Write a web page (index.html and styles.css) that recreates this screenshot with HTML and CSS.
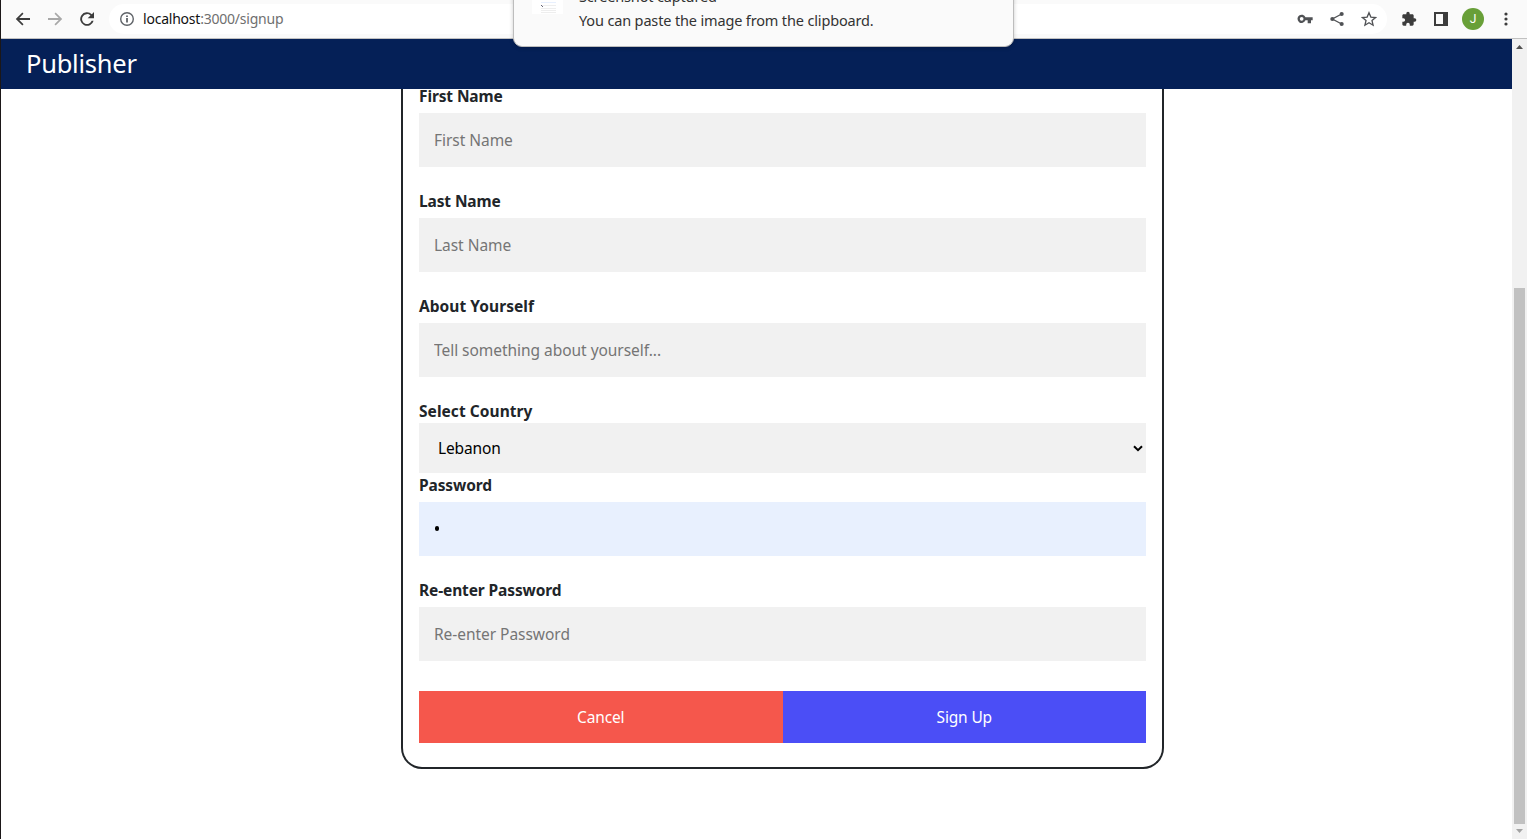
FILE: index.html
```html
<!DOCTYPE html>
<html lang="en">
<head>
<meta charset="utf-8">
<title>Publisher</title>
<link rel="stylesheet" href="styles.css">
</head>
<body>
<div class="window">
  <header class="toolbar">
    <svg class="icon" viewBox="0 0 24 24"><path fill="#3c3c3c" d="M22.500 10.600H6.400l6.300-6.300L11 2.400 1.200 12l9.800 9.700 1.800-1.900-6.400-6.400h16.100z"/></svg>
    <svg class="icon" viewBox="0 0 24 24"><path fill="#a8a8a8" d="M1.500 10.600h16.100l-6.300-6.300L13 2.400l9.800 9.600-9.800 9.700-1.800-1.900 6.400-6.400H1.500z"/></svg>
    <svg class="icon" viewBox="0 0 24 24"><path fill="#3c3c3c" d="M19.200 4.800A10.200 10.200 0 1 0 21.900 14.500h-2.900A7.400 7.400 0 1 1 17.200 6.800L13 11h9.500V1.500z"/></svg>
    <div class="omnibox">
      <svg class="info" viewBox="0 0 16 16"><circle cx="8" cy="8" r="6.300" fill="none" stroke="#5f6368" stroke-width="1.400"/><path fill="#5f6368" d="M7.100 7h1.800v4.500H7.100zM7.100 4.400h1.800v1.700H7.100z"/></svg>
      <span class="url"><span class="host">localhost</span>:3000/signup</span>
      <div class="actions">
        <svg viewBox="0 0 24 24"><path fill="#505255" d="M12.700 9.500A6.200 6.200 0 1 0 12.700 14H16v4.300h5V14h2.500V9.500zM7 14.500a2.800 2.800 0 1 1 0-5.600 2.800 2.800 0 0 1 0 5.600z"/></svg>
        <svg viewBox="0 0 24 24"><path d="M19 4.500 5 12l14 7.500" fill="none" stroke="#505255" stroke-width="2"/><g fill="#505255"><circle cx="19" cy="4.500" r="3.100"/><circle cx="5" cy="12" r="3.100"/><circle cx="19" cy="19.500" r="3.100"/></g></svg>
        <svg viewBox="0 0 24 24"><path d="m12 2.700 2.800 6.500 7 .6-5.300 4.600 1.600 6.900-6.100-3.700-6.100 3.700 1.600-6.900-5.300-4.600 7-.6z" fill="none" stroke="#505255" stroke-width="2"/></svg>
      </div>
    </div>
    <div class="extras">
      <svg class="icon" viewBox="0 0 24 24"><path fill="#3c3c3c" d="M20.500 11H19V7c0-1.100-.9-2-2-2h-4V3.500a2.500 2.500 0 0 0-5 0V5H4c-1.100 0-2 .9-2 2v3.800h1.500a2.700 2.700 0 0 1 0 5.400H2V20c0 1.100.9 2 2 2h3.800v-1.500a2.700 2.700 0 0 1 5.400 0V22H17c1.100 0 2-.9 2-2v-4h1.500a2.500 2.500 0 0 0 0-5z"/></svg>
      <svg class="panel" viewBox="0 0 14 14"><path fill="#3c3c3c" fill-rule="evenodd" d="M0 0h14v14H0zM2 2v10h7V2z"/></svg>
      <span class="avatar">J</span>
      <svg class="dots" viewBox="0 0 4 14"><g fill="#3c3c3c"><circle cx="2" cy="2" r="1.600"/><circle cx="2" cy="7" r="1.600"/><circle cx="2" cy="12" r="1.600"/></g></svg>
    </div>
  </header>

  <div class="viewport">
    <div class="page">
      <nav class="navbar"><span class="brand">Publisher</span></nav>
      <main class="content">
        <form class="card">
          <label class="label" for="first">First Name</label>
          <input class="field" id="first" type="text" placeholder="First Name">
          <label class="label" for="last">Last Name</label>
          <input class="field" id="last" type="text" placeholder="Last Name">
          <label class="label label-wide" for="about">About Yourself</label>
          <input class="field" id="about" type="text" placeholder="Tell something about yourself...">
          <span class="label label-tight label-wide">Select Country</span>
          <div class="select"><span>Lebanon</span>
            <svg class="chevron" viewBox="0 0 10 7"><path d="m1 1.200 4 4 4-4" fill="none" stroke="#000" stroke-width="2"/></svg>
          </div>
          <span class="label">Password</span>
          <div class="field filled"><span class="bullet"></span></div>
          <label class="label" for="again">Re-enter Password</label>
          <input class="field" id="again" type="text" placeholder="Re-enter Password">
          <div class="buttons">
            <button class="btn cancel" type="button">Cancel</button>
            <button class="btn signup" type="button">Sign Up</button>
          </div>
        </form>
      </main>
    </div>
    <aside class="scrollbar">
      <svg class="arrow" viewBox="0 0 7 4"><path fill="#505050" d="M0 4 3.500 0 7 4z"/></svg>
      <div class="thumb"></div>
      <svg class="arrow" viewBox="0 0 7 4"><path fill="#a3a3a3" d="M0 0h7L3.500 4z"/></svg>
    </aside>
  </div>

  <div class="notice">
    <svg class="thumbnail" viewBox="0 0 31 14"><path fill="#fff" d="M0 0h31v14H0z"/><path fill="#e8f0fe" d="M9 2h15v1H9z"/><path fill="#eee" d="M9 5h15v1H9zM9 8h15v1H9zM9 10h15v1H9zM9 12h15v1H9z"/><path fill="#667" d="M9 5h1v1H9zM10 6h1v1h-1z"/></svg>
    <div class="notice-text"><div class="notice-title">Screenshot captured</div><div class="notice-body">You can paste the image from the clipboard.</div></div>
  </div>
</div>
</body>
</html>
```

FILE: styles.css
```css
* { box-sizing: border-box; }
body { margin: 0; font-family: "Noto Sans", sans-serif; color: #212529; background: #fff; overflow: hidden; }
svg { display: block; flex: none; }
.window { position: relative; width: 1527px; height: 839px; display: flex; flex-direction: column; border-left: 1px solid #1b1718; overflow: hidden; }

.toolbar { height: 39px; flex: none; display: flex; align-items: center; padding-left: 14px; background: #fafafa; border-bottom: 1px solid #c1c1c1; }
.icon { width: 16px; height: 16px; margin-right: 16px; }
.omnibox { width: 1278px; height: 30px; margin-left: -2px; border-radius: 15px; background: #fff; display: flex; align-items: center; padding: 0 10px; }
.info { width: 16px; height: 16px; }
.url { margin: -1px 0 0 8px; font-size: 14px; letter-spacing: -.22px; color: #6f6f6f; }
.host { color: #111; }
.actions { margin-left: auto; display: flex; gap: 16px; }
.actions svg { width: 16px; height: 16px; }
.extras { display: flex; align-items: center; margin-left: 14px; }
.panel { width: 14px; height: 14px; margin-left: 1px; }
.avatar { width: 22px; height: 22px; margin-left: 14px; border-radius: 50%; background: #689f38; color: #fff; font: 12px/22px Roboto, sans-serif; text-align: center; }
.dots { width: 4px; height: 14px; margin-left: 19.500px; }

.viewport { flex: 1; min-height: 0; display: flex; }
.page { flex: 1; display: flex; flex-direction: column; }
.navbar { height: 50px; flex: none; background: #052057; padding-left: 25px; }
.brand { display: block; font-size: 25.500px; line-height: 49px; color: #fff; letter-spacing: -.25px; }
.content { flex: 1; min-height: 0; overflow: hidden; }
.card { width: 763px; margin: -5px 0 0 400px; padding: 0 16px 24px; border: solid #212529; border-width: 0 2px 2px; border-radius: 0 0 21px 21px; display: flex; flex-direction: column; }
.label { height: 24px; margin-bottom: 5px; font-size: 15.500px; line-height: 24px; font-weight: 700; letter-spacing: -.12px; }
.label-wide { letter-spacing: .05px; }
.label-tight { margin-bottom: 0; }
.field { width: 100%; height: 54px; margin: 0 0 22px; padding: 0 15px; border: 0; border-radius: 0; background: #f1f1f1; font: 15.500px "Noto Sans", sans-serif; letter-spacing: -.04px; }
.field::placeholder { color: #757575; }
.filled { background: #e8f0fe; display: flex; align-items: center; }
.bullet { width: 4.500px; height: 4.500px; margin: -1px 0 0 .5px; border-radius: 50%; background: #000; }
.select { height: 50px; padding: 0 3px 0 19px; background: #f1f1f1; color: #000; font-size: 15.500px; letter-spacing: -.15px; display: flex; align-items: center; justify-content: space-between; }
.chevron { width: 10px; height: 7px; }
.buttons { display: flex; margin-top: 8px; }
.btn { flex: 1; height: 52px; border: 0; padding: 0; color: #fff; font: 15.500px "Noto Sans", sans-serif; letter-spacing: -.15px; }
.cancel { background: #f5574c; }
.signup { background: #4b4ef6; }

.scrollbar { width: 15px; background: #f1f1f1; display: flex; flex-direction: column; align-items: center; padding: 6px 0; }
.arrow { width: 7px; height: 4px; }
.thumb { width: 11px; height: 536px; margin: 239px 0 5px; background: #c1c1c1; }

.notice { position: absolute; left: 512px; top: -20px; width: 501px; height: 67px; border: 1px solid #bdbdbd; border-radius: 9px; background: #fafafa; box-shadow: 0 1px 4px rgba(0,0,0,.2); display: flex; padding: 19px 0 0 18px; }
.thumbnail { width: 31px; height: 14px; }
.notice-text { margin: -16px 0 0 16px; font-size: 14.500px; line-height: 24px; letter-spacing: -.15px; color: #333; }
```
